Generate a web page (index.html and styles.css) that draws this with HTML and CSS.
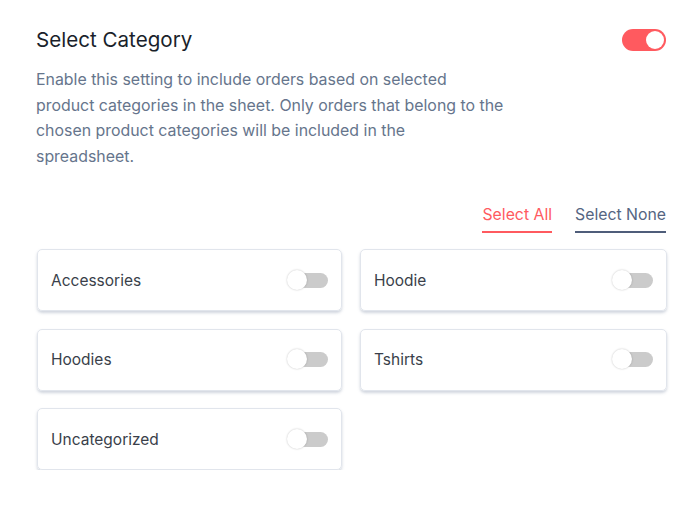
FILE: index.html
```html
<!DOCTYPE html>
<html>
<head>
<meta charset="utf-8">
<link rel="stylesheet" href="styles.css">
</head>
<body>
<div class="panel">
  <div class="header">
    <h2 class="title">Select Category</h2>
    <span class="switch on"><span class="knob"></span></span>
  </div>
  <p class="desc">Enable this setting to include orders based on selected<br>product categories in the sheet. Only orders that belong to the<br>chosen product categories will be included in the<br>spreadsheet.</p>
  <div class="actions">
    <a class="link all">Select All</a>
    <a class="link none">Select None</a>
  </div>
  <div class="grid">
    <div class="card"><span>Accessories</span><span class="mini"><span class="mknob"></span></span></div>
    <div class="card"><span>Hoodie</span><span class="mini"><span class="mknob"></span></span></div>
    <div class="card"><span>Hoodies</span><span class="mini"><span class="mknob"></span></span></div>
    <div class="card"><span>Tshirts</span><span class="mini"><span class="mknob"></span></span></div>
    <div class="card"><span>Uncategorized</span><span class="mini"><span class="mknob"></span></span></div>
  </div>
</div>
</body>
</html>
```
FILE: styles.css
```css
html, body { margin: 0; padding: 0; background: #fff; }
body { font-family: Inter, "Noto Sans", sans-serif; }
.panel { padding: 28px 34px 0 36px; width: 630px; }
.header { display: flex; justify-content: space-between; align-items: center; }
.title { margin: 0; font-size: 20.6px; font-weight: 400; color: #1a1f2b; line-height: 24px; }
.switch { display: flex; align-items: center; justify-content: flex-end; width: 44px; height: 22px; border-radius: 11px; background: #ff5a5f; box-sizing: border-box; padding: 2px; }
.knob { width: 18px; height: 18px; border-radius: 50%; background: #fff; }
.desc { margin: 15px 0 0; font-size: 15.9px; line-height: 25.6px; color: #66758c; white-space: nowrap; }
.actions { display: flex; justify-content: flex-end; gap: 23px; margin-top: 36px; }
.link { font-size: 15.8px; line-height: 20px; padding-bottom: 6px; border-bottom: 2px solid; cursor: pointer; }
.link.all { color: #ff5a5f; border-color: #ff5a5f; }
.link.none { color: #556582; border-color: #4f5d7a; }
.grid { display: grid; grid-template-columns: 305px 307px; column-gap: 18px; row-gap: 17.5px; margin-top: 16px; margin-left: 1px; }
.card { display: flex; align-items: center; justify-content: space-between; height: 62px; box-sizing: border-box; padding: 0 13px; border: 1px solid #e1e5ec; border-radius: 5px; box-shadow: 0 2px 3px rgba(120,135,160,0.35); font-size: 15.5px; color: #3a3f4a; }
.mini { position: relative; width: 30px; height: 15px; border-radius: 8px; background: #cbcbcb; }
.mknob { position: absolute; left: -11px; top: -3px; width: 20px; height: 20px; border-radius: 50%; background: #fff; box-shadow: 0 0 2px rgba(0,0,0,0.25); }
```
